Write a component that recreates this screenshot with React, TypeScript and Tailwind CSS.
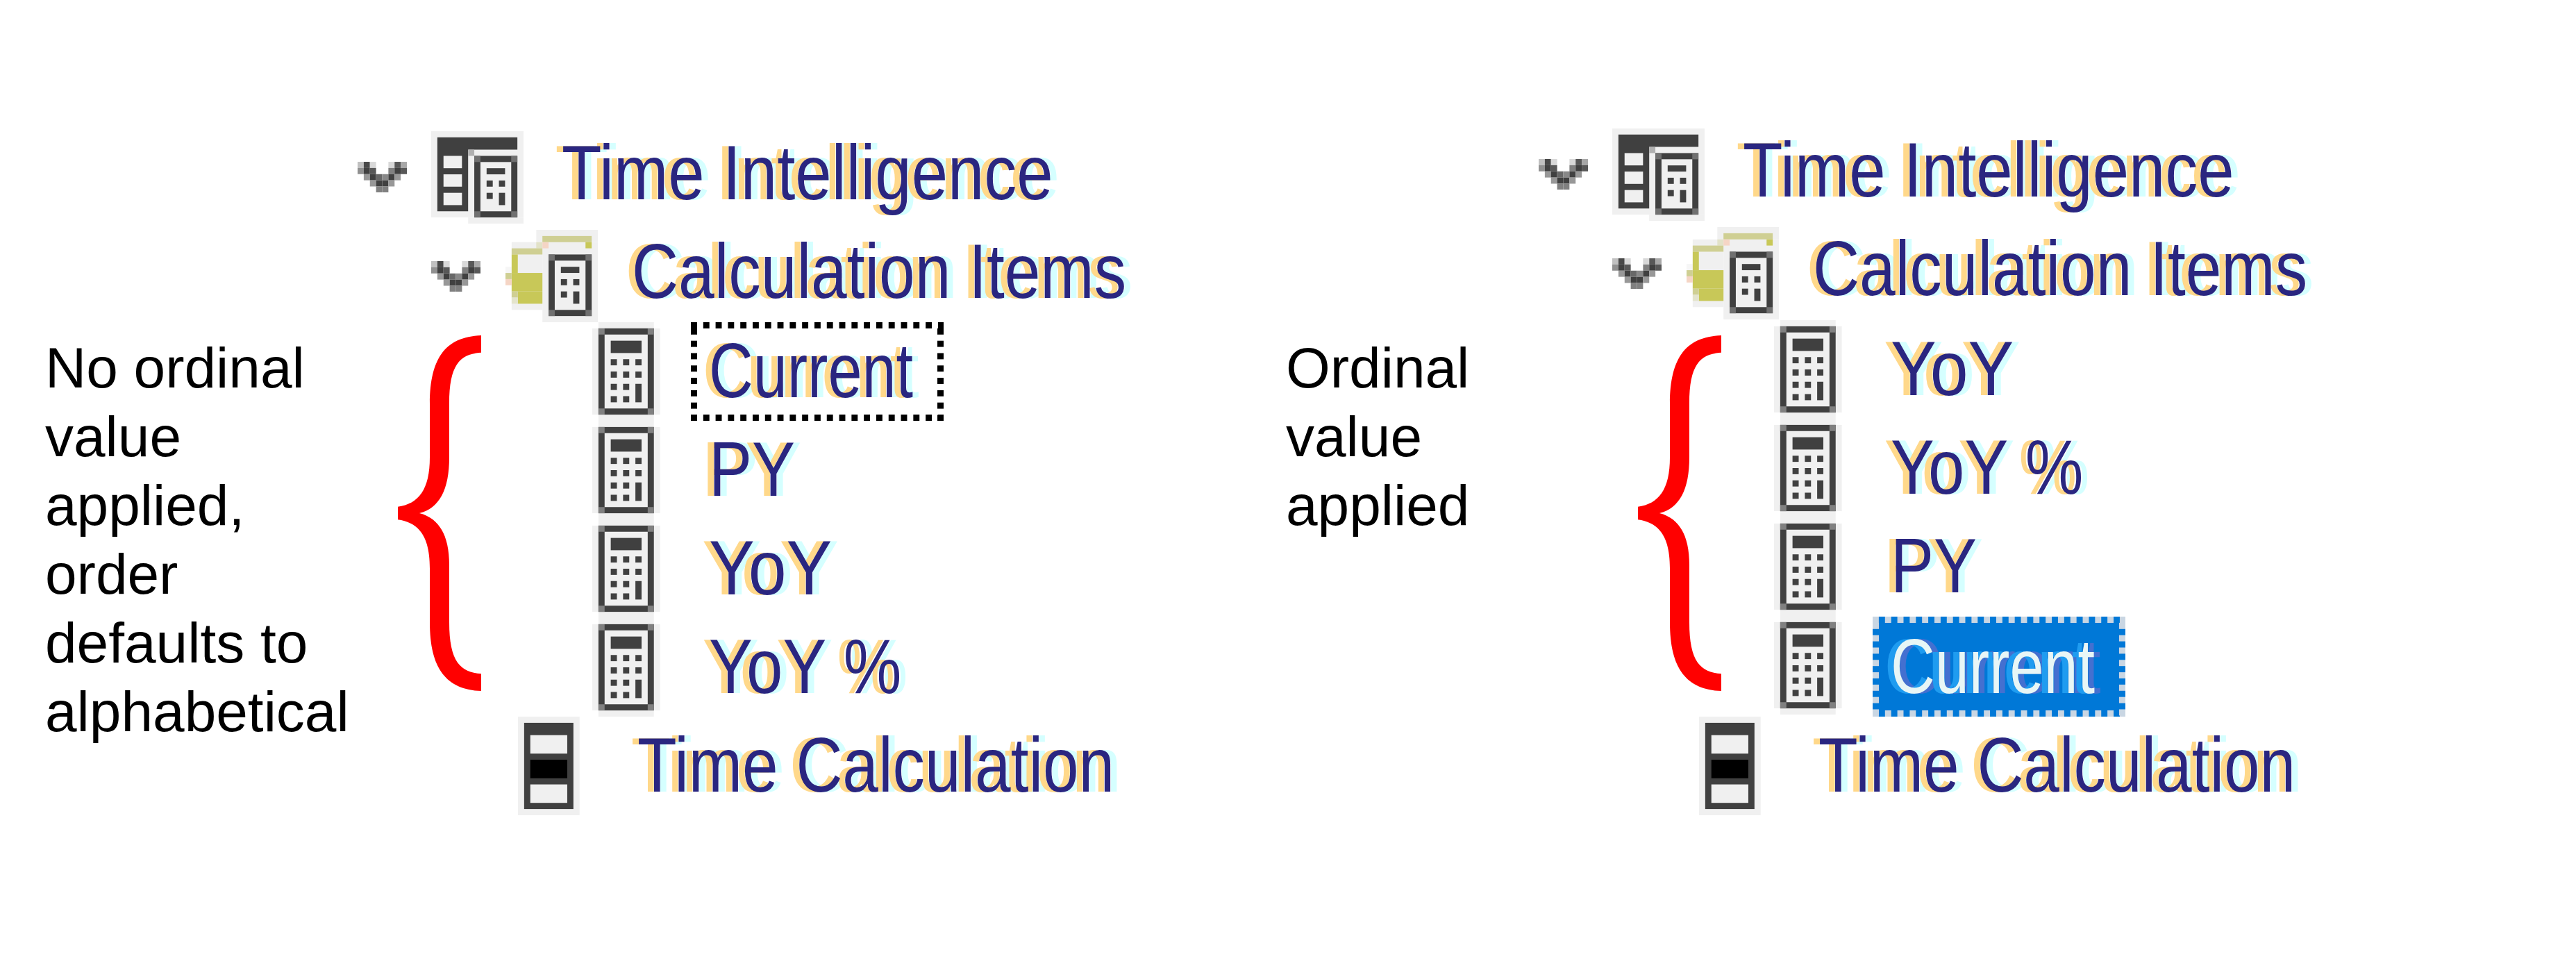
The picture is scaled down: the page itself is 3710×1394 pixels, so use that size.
import React from "react";

const FG = "#404040";
const LIGHT = "#f0f0f0";

function Chevron({ className }: { className?: string }) {
  const px: [number, number, string][] = [
    [0, 0, "#c0c0c0"], [1, 0, "#484848"], [2, 0, "#d8d8d8"], [5, 0, "#d8d8d8"], [6, 0, "#585858"], [7, 0, "#a8a8a8"],
    [0, 1, "#909090"], [1, 1, "#404040"], [2, 1, "#585858"], [5, 1, "#808080"], [6, 1, "#404040"], [7, 1, "#585858"],
    [1, 2, "#989898"], [2, 2, "#404040"], [3, 2, "#686868"], [4, 2, "#888888"], [5, 2, "#404040"], [6, 2, "#989898"],
    [2, 3, "#989898"], [3, 3, "#404040"], [4, 3, "#404040"], [5, 3, "#989898"],
    [3, 4, "#808080"], [4, 4, "#808080"],
  ];
  return (
    <svg viewBox="0 0 8 5" width="71" height="44.4" className={className}>
      {px.map(([x, y, c]) => (
        <rect key={`${x}-${y}`} x={x} y={y} width="1" height="1" fill={c} />
      ))}
    </svg>
  );
}

function MiniCalc() {
  return (
    <g>
      <rect x="6" y="3" width="7" height="10" fill={FG} />
      <rect x="6" y="3" width="1" height="1" fill="#707070" />
      <rect x="12" y="3" width="1" height="1" fill="#707070" />
      <rect x="6" y="12" width="1" height="1" fill="#707070" />
      <rect x="12" y="12" width="1" height="1" fill="#707070" />
      <rect x="7" y="4" width="5" height="8" fill={LIGHT} />
      <rect x="8" y="5" width="3" height="1" fill={FG} />
      <rect x="8" y="7" width="1" height="1" fill={FG} />
      <rect x="10" y="7" width="1" height="1" fill={FG} />
      <rect x="8" y="9" width="1" height="1" fill={FG} />
      <rect x="10" y="9" width="1" height="2" fill={FG} />
    </g>
  );
}

function TableIcon() {
  return (
    <svg viewBox="-1 -1 15 15" width="133" height="133" className="shrink-0">
      <rect x="-1" y="-1" width="15" height="14" fill={LIGHT} />
      <rect x="5" y="13" width="9" height="1" fill={LIGHT} />
      <path d="M0 0H13V2H5V12H0Z" fill={FG} />
      <rect x="5" y="2" width="1" height="1" fill="#b0b0b0" />
      <rect x="1" y="3" width="3" height="2" fill={LIGHT} />
      <rect x="1" y="6" width="3" height="2" fill={LIGHT} />
      <rect x="1" y="9" width="3" height="2" fill={LIGHT} />
      <MiniCalc />
    </svg>
  );
}

function FolderIcon() {
  const tan = "#cfcf93";
  const olive = "#c8c858";
  return (
    <svg viewBox="0 0 15 15" width="133" height="133" className="shrink-0">
      <rect x="5" y="0" width="10" height="2" fill={LIGHT} />
      <rect x="6" y="2" width="9" height="13" fill={LIGHT} />
      <rect x="1" y="2" width="5" height="11" fill={LIGHT} />
      <rect x="0" y="6" width="1" height="3" fill="#f6f6f6" />
      <rect x="6" y="1" width="8" height="1" fill={tan} />
      <rect x="13" y="2" width="1" height="1" fill={olive} />
      <rect x="5" y="2" width="1" height="1" fill="#e2e2c8" />
      <rect x="6" y="2" width="1" height="1" fill="#f5d5c5" />
      <rect x="1" y="3" width="5" height="1" fill={tan} />
      <rect x="1" y="4" width="1" height="3" fill={olive} />
      <rect x="1" y="7" width="5" height="3" fill={olive} />
      <rect x="2" y="10" width="4" height="2" fill={olive} />
      <rect x="1" y="10" width="1" height="1" fill={tan} />
      <rect x="1" y="11" width="1" height="1" fill="#e4e4cc" />
      <rect x="0" y="7" width="1" height="1" fill={tan} />
      <rect x="0" y="8" width="1" height="1" fill="#f5d5c5" />
      <g transform="translate(1 1)">
        <MiniCalc />
      </g>
    </svg>
  );
}

function CalcIcon() {
  const keys: [number, number][] = [
    [2, 5], [4, 5], [6, 5],
    [2, 7], [4, 7], [6, 7],
    [2, 9], [4, 9],
    [2, 11], [4, 11],
  ];
  return (
    <svg viewBox="-1 -1 11 16" width="97.6" height="142" className="shrink-0">
      <rect x="-1" y="0" width="11" height="14" fill={LIGHT} />
      <rect x="0" y="-1" width="9" height="16" fill={LIGHT} />
      <rect x="0" y="0" width="9" height="14" fill={FG} />
      <rect x="0" y="0" width="1" height="1" fill="#808080" />
      <rect x="8" y="0" width="1" height="1" fill="#808080" />
      <rect x="0" y="13" width="1" height="1" fill="#808080" />
      <rect x="8" y="13" width="1" height="1" fill="#808080" />
      <rect x="1" y="1" width="7" height="12" fill={LIGHT} />
      <rect x="2" y="2" width="5" height="2" fill={FG} />
      {keys.map(([x, y]) => (
        <rect key={`${x}-${y}`} x={x} y={y} width="1" height="1" fill={FG} />
      ))}
      <rect x="6" y="9" width="1" height="3" fill={FG} />
    </svg>
  );
}

function ColumnIcon() {
  return (
    <svg viewBox="-1 -1 10 16" width="88.7" height="142" className="shrink-0">
      <rect x="-1" y="-1" width="10" height="16" fill={LIGHT} />
      <rect x="0" y="0" width="8" height="14" fill={FG} />
      <rect x="1" y="2" width="6" height="3" fill={LIGHT} />
      <rect x="1" y="6" width="6" height="3" fill="#000000" />
      <rect x="1" y="10" width="6" height="3" fill={LIGHT} />
    </svg>
  );
}

function Brace({ className }: { className?: string }) {
  return (
    <svg viewBox="0 0 120 496" width="120" height="512" preserveAspectRatio="none" className={className}>
      <path
        d="M120 0C70 2 46 30 46 95L46 170C46 215 30 235 0 239L0 257C30 261 46 280 46 325L46 400C46 465 70 494 120 496L120 472C90 470 74 455 74 400L74 320C74 280 60 255 31 248C60 241 74 215 74 170L74 95C74 40 90 26 120 24Z"
        fill="#ff0000"
      />
    </svg>
  );
}

const treeBase =
  "inline-block origin-left font-['Liberation_Sans',Arial,sans-serif] text-[112px] leading-none whitespace-nowrap";
const treeText = `${treeBase} text-[#2a2680] [text-shadow:-11px_0_#ffd88a,11px_0_#d5ffff]`;
const selectedText = `${treeBase} text-[#e8f6f6] [text-shadow:-11px_0_#1f9cf0,11px_0_#4470d0]`;

const itemScale: Record<string, string> = {
  Current: "scale-x-[0.787]",
  PY: "scale-x-[0.83]",
  YoY: "scale-x-[0.88]",
  "YoY %": "scale-x-[0.84]",
};

function ItemRow({ label, state }: { label: string; state?: "focus" | "selected" }) {
  const scale = itemScale[label];
  return (
    <div className="flex h-[142px] items-start">
      <CalcIcon />
      {state === "focus" ? (
        <div className="ml-[44px] h-[142px] w-[364px] pl-[26px] pt-[14px] bg-[linear-gradient(90deg,#000_50%,transparent_50%),linear-gradient(90deg,#000_50%,transparent_50%),linear-gradient(0deg,#000_50%,transparent_50%),linear-gradient(0deg,#000_50%,transparent_50%)] bg-[length:17.8px_9px,17.8px_9px,9px_17.8px,9px_17.8px] bg-[position:0_0,0_100%,0_0,100%_0] [background-repeat:repeat-x,repeat-x,repeat-y,repeat-y]">
          <span className={`${treeText} ${scale}`}>{label}</span>
        </div>
      ) : state === "selected" ? (
        <div className="ml-[44px] mt-px h-[144px] w-[364px] bg-[#0078d7] pl-[26px] pt-[16px] bg-[linear-gradient(90deg,#c9d6e3_50%,transparent_50%),linear-gradient(90deg,#c9d6e3_50%,transparent_50%),linear-gradient(0deg,#c9d6e3_50%,transparent_50%),linear-gradient(0deg,#c9d6e3_50%,transparent_50%)] bg-[length:17.8px_9px,17.8px_9px,9px_17.8px,9px_17.8px] bg-[position:0_0,0_100%,0_0,100%_0] [background-repeat:repeat-x,repeat-x,repeat-y,repeat-y]">
          <span className={`${selectedText} ${scale}`}>{label}</span>
        </div>
      ) : (
        <div className="ml-[70px] pt-[14px]">
          <span className={`${treeText} ${scale}`}>{label}</span>
        </div>
      )}
    </div>
  );
}

function Tree({
  rows,
  second,
  braceClass,
  lastClass,
}: {
  rows: { label: string; state?: "focus" | "selected" }[];
  second: string;
  braceClass: string;
  lastClass: string;
}) {
  return (
    <div className="flex flex-col">
      <div className="flex h-[142px] items-start">
        <Chevron className="mt-[44px] shrink-0" />
        <div className="ml-[35px] shrink-0">
          <TableIcon />
        </div>
        <div className="ml-[55px] pt-[4px]">
          <span className={`${treeText} scale-x-[0.84]`}>Time Intelligence</span>
        </div>
      </div>
      <div className={`flex items-start pl-[106px] ${second}`}>
        <Chevron className="mt-[45px] shrink-0" />
        <div className="ml-[36px] shrink-0">
          <FolderIcon />
        </div>
        <div className="ml-[49px] pt-[4px]">
          <span className={`${treeText} scale-x-[0.829]`}>Calculation Items</span>
        </div>
      </div>
      <div className="flex items-start">
        <Brace className={braceClass} />
        <div className="flex flex-col">
          {rows.map((r) => (
            <ItemRow key={r.label} label={r.label} state={r.state} />
          ))}
        </div>
      </div>
      <div className={`flex h-[142px] items-start pl-[231px] ${lastClass}`}>
        <ColumnIcon />
        <div className="ml-[83px] pt-[14px]">
          <span className={`${treeText} scale-x-[0.828]`}>Time Calculation</span>
        </div>
      </div>
    </div>
  );
}

function Note({ lines, className }: { lines: string[]; className: string }) {
  return (
    <div className={`shrink-0 font-['Liberation_Sans',Arial,sans-serif] text-[82px] leading-[99px] text-black ${className}`}>
      {lines.map((l) => (
        <div key={l} className="whitespace-nowrap">
          {l}
        </div>
      ))}
    </div>
  );
}

export default function App() {
  return (
    <div className="flex h-[1394px] w-[3710px] overflow-hidden bg-white pl-[63px]">
      <div className="flex w-[1787px] shrink-0 items-start pt-[189px]">
        <Note
          className="w-[452px] pl-[2px] pt-[291px]"
          lines={["No ordinal", "value", "applied,", "order", "defaults to", "alphabetical"]}
        />
        <Tree
          second="h-[133px]"
          lastClass=""
          braceClass="ml-[58px] mr-[160px] mt-[19px] shrink-0"
          rows={[{ label: "Current", state: "focus" }, { label: "PY" }, { label: "YoY" }, { label: "YoY %" }]}
        />
      </div>
      <div className="flex shrink-0 items-start pt-[185px]">
        <Note className="w-[366px] pl-[2px] pt-[295px]" lines={["Ordinal", "value", "applied"]} />
        <Tree
          second="h-[134px]"
          lastClass="mt-[3px]"
          braceClass="ml-[143px] mr-[76px] mt-[22px] shrink-0"
          rows={[{ label: "YoY" }, { label: "YoY %" }, { label: "PY" }, { label: "Current", state: "selected" }]}
        />
      </div>
    </div>
  );
}
